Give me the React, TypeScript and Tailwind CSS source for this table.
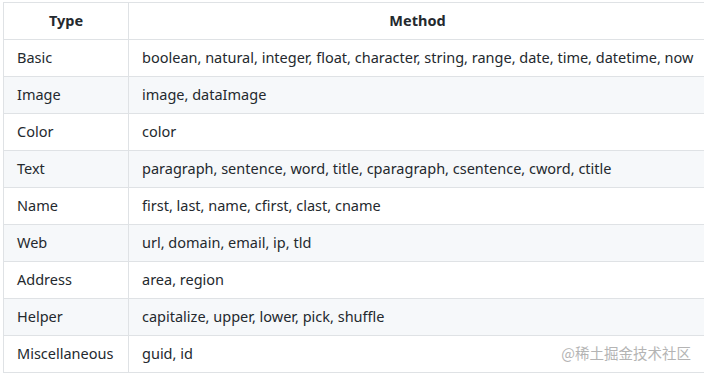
const rows: [string, string][] = [
  ["Basic", "boolean, natural, integer, float, character, string, range, date, time, datetime, now"],
  ["Image", "image, dataImage"],
  ["Color", "color"],
  ["Text", "paragraph, sentence, word, title, cparagraph, csentence, cword, ctitle"],
  ["Name", "first, last, name, cfirst, clast, cname"],
  ["Web", "url, domain, email, ip, tld"],
  ["Address", "area, region"],
  ["Helper", "capitalize, upper, lower, pick, shuffle"],
  ["Miscellaneous", "guid, id"],
];

export default function App() {
  return (
    <div className="relative h-[375px] w-[704px] overflow-hidden bg-white pl-[3px] pt-[2px] font-['Noto_Sans',sans-serif] text-[14.5px] text-[#24292e]">
      <table className="w-[704px] table-fixed border-collapse">
        <colgroup>
          <col className="w-[125px]" />
          <col />
        </colgroup>
        <thead>
          <tr className="h-[37px]">
            <th className="border border-[#dfe2e5] px-[13px] text-center font-bold">Type</th>
            <th className="border border-[#dfe2e5] px-[13px] text-center font-bold">Method</th>
          </tr>
        </thead>
        <tbody>
          {rows.map(([type, method], i) => (
            <tr key={type} className={i % 2 === 1 ? "h-[37px] bg-[#f6f8fa]" : "h-[37px] bg-white"}>
              <td className="border border-[#dfe2e5] px-[13px] whitespace-nowrap">{type}</td>
              <td className="border border-[#dfe2e5] px-[13px] whitespace-nowrap">{method}</td>
            </tr>
          ))}
        </tbody>
      </table>
      <div className="absolute right-[13px] top-[342px] font-['Noto_Sans_CJK_SC',sans-serif] text-[14.5px] text-[#b4b4b4]">
        @稀土掘金技术社区
      </div>
    </div>
  );
}
